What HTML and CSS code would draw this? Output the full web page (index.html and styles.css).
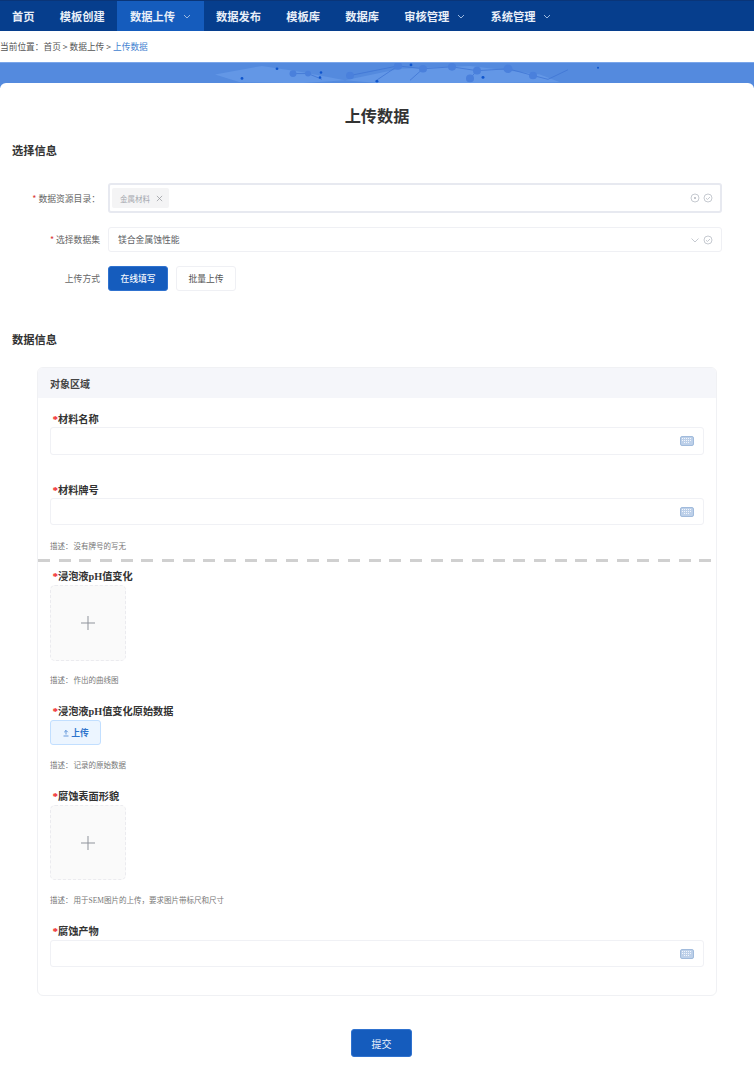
FILE: index.html
```html
<!DOCTYPE html>
<html lang="zh-CN">
<head>
<meta charset="utf-8">
<title>上传数据</title>
<link rel="stylesheet" href="styles.css">
</head>
<body>
<nav class="nav">
  <a class="nav-item">首页</a>
  <a class="nav-item">模板创建</a>
  <a class="nav-item is-active">数据上传<svg class="nav-caret" viewBox="0 0 8 5"><path d="M1 1l3 3 3-3"/></svg></a>
  <a class="nav-item">数据发布</a>
  <a class="nav-item">模板库</a>
  <a class="nav-item">数据库</a>
  <a class="nav-item">审核管理<svg class="nav-caret" viewBox="0 0 8 5"><path d="M1 1l3 3 3-3"/></svg></a>
  <a class="nav-item">系统管理<svg class="nav-caret" viewBox="0 0 8 5"><path d="M1 1l3 3 3-3"/></svg></a>
</nav>
<div class="crumbs">当前位置&#xFF1A;首页 &gt; 数据上传 &gt; <span class="crumb-current">上传数据</span></div>
<div class="banner">
  <svg class="banner-art" viewBox="0 0 754 26" preserveAspectRatio="none">
    <g class="art-patches">
      <path d="M215 12L262 3L300 9L345 18L300 21L240 20Z"/>
      <path d="M345 18L400 6L470 3L540 12L560 20L470 21L380 21Z"/>
    </g>
    <g class="art-lines">
      <path d="M350 13L398 3L423 6L452 4L477 8L508 6L533 13L548 17L568 7"/>
      <path d="M293 11L308 11L322 17M398 3L375 19M423 6L410 18M477 8L470 16"/>
    </g>
    <g class="art-nodes">
      <circle cx="293" cy="11" r="3.5"/><circle cx="308" cy="11" r="3"/><circle cx="350" cy="13" r="4"/>
      <circle cx="398" cy="3" r="4"/><circle cx="423" cy="6" r="4"/><circle cx="452" cy="4" r="4"/><circle cx="477" cy="8" r="4"/><circle cx="470" cy="16" r="4"/><circle cx="508" cy="6" r="4.5"/><circle cx="533" cy="13" r="4"/>
    </g>
    <g class="art-dots">
      <circle cx="277" cy="6" r="1.4"/><circle cx="321" cy="10" r="1.3"/><circle cx="320" cy="15" r="1.3"/><circle cx="242" cy="16" r="1.4"/><circle cx="411" cy="2" r="1.4"/><circle cx="483" cy="15" r="1.5"/><circle cx="377" cy="19" r="1.4"/><circle cx="598" cy="5" r="1"/>
    </g>
  </svg>
</div>
<main class="card">
  <h1 class="page-title">上传数据</h1>
  <h2 class="section-title">选择信息</h2>
  <div class="form-rows">
    <div class="form-row">
      <label class="row-label"><span class="mark">*</span> 数据资源目录&#xFF1A;</label>
      <div class="control control-tall">
        <span class="tag">金属材料<svg class="tag-x" viewBox="0 0 8 8"><path d="M1 1l6 6M7 1l-6 6"/></svg></span>
        <span class="control-icons">
          <svg class="mini" viewBox="0 0 10 10"><circle cx="5" cy="5" r="4"/><circle class="dot" cx="5" cy="5" r="1"/></svg>
          <svg class="mini" viewBox="0 0 10 10"><circle cx="5" cy="5" r="4"/><path d="M3 5.2l1.5 1.3L7 4"/></svg>
        </span>
      </div>
    </div>
    <div class="form-row">
      <label class="row-label"><span class="mark">*</span> 选择数据集</label>
      <div class="control control-short">
        <span class="control-value">镁合金属蚀性能</span>
        <span class="control-icons">
          <svg class="mini" viewBox="0 0 10 10"><path d="M1.5 3.5L5 7l3.5-3.5"/></svg>
          <svg class="mini" viewBox="0 0 10 10"><circle cx="5" cy="5" r="4"/><path d="M3 5.2l1.5 1.3L7 4"/></svg>
        </span>
      </div>
    </div>
    <div class="form-row">
      <label class="row-label">上传方式</label>
      <div class="mode-buttons">
        <button class="btn btn-primary">在线填写</button>
        <button class="btn btn-plain">批量上传</button>
      </div>
    </div>
  </div>
  <h2 class="section-title section-title-data">数据信息</h2>
  <section class="panel">
    <header class="panel-head">对象区域</header>
    <div class="panel-part part-top">
      <div class="field-label"><span class="req">*</span>材料名称</div>
      <div class="text-input input-tight input-28"><svg class="kbd" viewBox="0 0 14 10"><rect x=".5" y=".5" width="13" height="9" rx="1.5"/><path d="M2 2.5h10M2 4.5h10M4 6.5h6"/></svg></div>
      <div class="field-label label-gap-27"><span class="req">*</span>材料牌号</div>
      <div class="text-input input-tight"><svg class="kbd" viewBox="0 0 14 10"><rect x=".5" y=".5" width="13" height="9" rx="1.5"/><path d="M2 2.5h10M2 4.5h10M4 6.5h6"/></svg></div>
      <p class="desc desc-16"><span class="desc-key">描述&#xFF1A;</span>没有牌号的写无</p>
    </div>
    <div class="dashes"></div>
    <div class="panel-part part-bottom">
      <div class="field-label"><span class="req">*</span>浸泡液pH值变化</div>
      <div class="picker picker-76"><svg class="plus" viewBox="0 0 16 16"><path d="M8 1v14M1 8h14"/></svg></div>
      <p class="desc desc-14"><span class="desc-key">描述&#xFF1A;</span>作出的曲线图</p>
      <div class="field-label label-gap-18"><span class="req">*</span>浸泡液pH值变化原始数据</div>
      <button class="upload-btn"><svg class="upload-icon" viewBox="0 0 8 8"><path d="M4 5.5V1.5M2.2 3.2L4 1.4l1.8 1.8M1.5 7h5"/></svg>上传</button>
      <p class="desc"><span class="desc-key">描述&#xFF1A;</span>记录的原始数据</p>
      <div class="field-label label-gap-18"><span class="req">*</span>腐蚀表面形貌</div>
      <div class="picker"><svg class="plus" viewBox="0 0 16 16"><path d="M8 1v14M1 8h14"/></svg></div>
      <p class="desc"><span class="desc-key">描述&#xFF1A;</span>用于SEM图片的上传&#xFF0C;要求图片带标尺和尺寸</p>
      <div class="field-label label-gap-18"><span class="req">*</span>腐蚀产物</div>
      <div class="text-input"><svg class="kbd" viewBox="0 0 14 10"><rect x=".5" y=".5" width="13" height="9" rx="1.5"/><path d="M2 2.5h10M2 4.5h10M4 6.5h6"/></svg></div>
    </div>
  </section>
  <div class="submit-bar"><button class="btn-submit">提交</button></div>
</main>
</body>
</html>
```

FILE: styles.css
```css
* { box-sizing: border-box; }
html, body { margin: 0; padding: 0; }
body {
  background: #fff;
  color: #333;
  font-family: "Noto Sans CJK SC", "Liberation Sans", sans-serif;
}
button { font-family: inherit; cursor: pointer; }

/* top navigation */
.nav {
  display: flex;
  height: 31px;
  background: #063e8d;
  border-top: 1px solid #0a3578;
}
.nav-item {
  display: flex;
  align-items: center;
  padding: 0 12.6px;
  color: #e8eef8;
  font-size: 11.25px;
  font-weight: 700;
  white-space: nowrap;
}
.nav-item:first-child { padding-left: 12px; }
.nav-item.is-active { background: #155cbd; }
.nav-caret {
  width: 8px;
  height: 5px;
  margin-left: 8px;
  fill: none;
  stroke: #9db9df;
  stroke-width: 1;
}

/* breadcrumb */
.crumbs {
  height: 31px;
  white-space: pre;
  color: #555;
  font-size: 8.7px;
  line-height: 31px;
}
.crumb-current { color: #3f7fd0; }

/* banner */
.banner {
  height: 26px;
  background: #548ade;
  border-top: 1px solid #7aa6ea;
}
.banner-art { display: block; width: 100%; height: 100%; }
.art-patches path { fill: #6397e6; }
.art-lines path { fill: none; stroke: #3f75d4; stroke-width: .8; }
.art-nodes circle { fill: #4a80dc; }
.art-dots circle { fill: #0f55cc; }

/* main card */
.card {
  position: relative;
  margin-top: -5px;
  padding: 22px 0 14px;
  background: #fff;
  border-radius: 6px 6px 0 0;
}
.page-title {
  margin: 0;
  text-align: center;
  color: #333;
  font-size: 16.2px;
  line-height: 20px;
  font-weight: 700;
}
.section-title {
  margin: 17px 0 0 12px;
  color: #333;
  font-size: 11.25px;
  line-height: 16px;
  font-weight: 700;
}
.section-title-data { margin-top: 40px; }

/* selection form */
.form-rows {
  display: flex;
  flex-direction: column;
  gap: 14px;
  margin-top: 25px;
  padding-right: 32px;
}
.form-row { display: flex; align-items: center; gap: 8px; }
.row-label {
  flex: 0 0 100px;
  text-align: right;
  color: #666;
  font-size: 8.8px;
  white-space: nowrap;
}
.mark { color: #d9383a; }
.control {
  flex: 1;
  display: flex;
  align-items: center;
  justify-content: space-between;
  background: #fff;
  border-radius: 3px;
}
.control-tall { height: 30px; padding: 0 7px 0 2px; border: 2px solid #e7e9f0; }
.control-short { height: 25px; padding: 0 8px 0 9px; border: 1px solid #eff0f4; }
.control-value { color: #606266; font-size: 8.8px; }
.tag {
  display: inline-flex;
  align-items: center;
  height: 20px;
  padding: 0 6px 0 8px;
  gap: 6px;
  background: #f4f4f5;
  border-radius: 2px;
  color: #a3a6ad;
  font-size: 7.5px;
}
.tag-x { width: 7px; height: 7px; fill: none; stroke: #909399; stroke-width: .8; }
.control-icons { display: flex; gap: 3px; }
.mini { width: 10px; height: 10px; fill: none; stroke: #c0c4cc; stroke-width: .9; }
.mini .dot { fill: #b0b4bc; stroke: none; }
.mode-buttons { display: flex; gap: 8px; }
.btn {
  width: 60px;
  height: 25px;
  padding: 0;
  border-radius: 3px;
  font-size: 8.8px;
}
.btn-primary { background: #155cbd; border: 1px solid #2f72cf; color: #f2f6fc; font-weight: 500; }
.btn-plain { background: #fff; border: 1px solid #eff0f4; color: #555; }

/* data panel */
.panel {
  margin: 20px 37px 0;
  border: 1px solid #f0f1f4;
  border-radius: 6px;
}
.panel-head {
  display: flex;
  align-items: center;
  height: 30px;
  padding: 0 12px;
  background: #f5f6fa;
  border-radius: 5px 5px 0 0;
  color: #444;
  font-size: 10px;
  font-weight: 700;
}
.panel-part { padding: 0 12px; }
.part-top { padding-top: 13px; padding-bottom: 8px; }
.part-bottom { padding-top: 6px; padding-bottom: 28px; }
.dashes {
  height: 3px;
  background: repeating-linear-gradient(to right, #d0d0d0 0 12px, transparent 12px 20.67px);
}
.field-label {
  height: 14px;
  color: #333;
  font-family: "Liberation Serif", "Noto Sans CJK SC", serif;
  font-size: 10.2px;
  line-height: 16px;
  font-weight: 700;
}
.label-gap-18 { margin-top: 18px; }
.label-gap-27 { margin-top: 27px; }
.req { margin-left: 2.5px; color: #f01010; font-size: 11px; }
.text-input {
  display: flex;
  align-items: center;
  justify-content: flex-end;
  height: 27px;
  margin-top: 3px;
  padding-right: 9px;
  background: #fff;
  border: 1px solid #f0f1f5;
  border-radius: 3px;
}
.input-tight { margin-top: 2px; }
.input-28 { height: 28px; }
.kbd { width: 14px; height: 10px; fill: #bdd0e9; stroke: #92b0d6; stroke-width: .8; }
.kbd path { fill: none; stroke: #f2f6fc; stroke-width: 1; stroke-dasharray: 1 1; }
.desc {
  height: 10px;
  margin: 15px 0 0;
  color: #777;
  font-family: "Liberation Serif", "Noto Sans CJK SC", serif;
  font-size: 7.5px;
  line-height: 12px;
}
.desc-14 { margin-top: 14px; }
.desc-16 { margin-top: 16px; }
.desc-key { margin-right: 1px; }
.picker {
  display: flex;
  align-items: center;
  justify-content: center;
  width: 76px;
  height: 75px;
  margin-top: 3px;
  background: #fafafa;
  border: 1px dashed #ebebef;
  border-radius: 5px;
}
.picker-76 { height: 76px; }
.plus { width: 16px; height: 16px; fill: none; stroke: #8f939b; stroke-width: 1; }
.upload-btn {
  display: flex;
  align-items: center;
  justify-content: center;
  gap: 1px;
  width: 51px;
  height: 25px;
  margin-top: 3px;
  padding: 0;
  background: #ecf5ff;
  border: 1px solid #c2dfff;
  border-radius: 3px;
  color: #2f74cc;
  font-size: 8.8px;
  font-weight: 700;
}
.upload-icon { width: 8px; height: 8px; fill: none; stroke: #2f74cc; stroke-width: .7; }

/* submit */
.submit-bar { display: flex; justify-content: center; margin-top: 33px; padding-left: 9px; }
.btn-submit {
  width: 61px;
  height: 28px;
  padding: 0;
  background: #155cbd;
  border: 1px solid #2f72cf;
  border-radius: 3px;
  color: #e8f0fb;
  font-size: 10px;
}
```
